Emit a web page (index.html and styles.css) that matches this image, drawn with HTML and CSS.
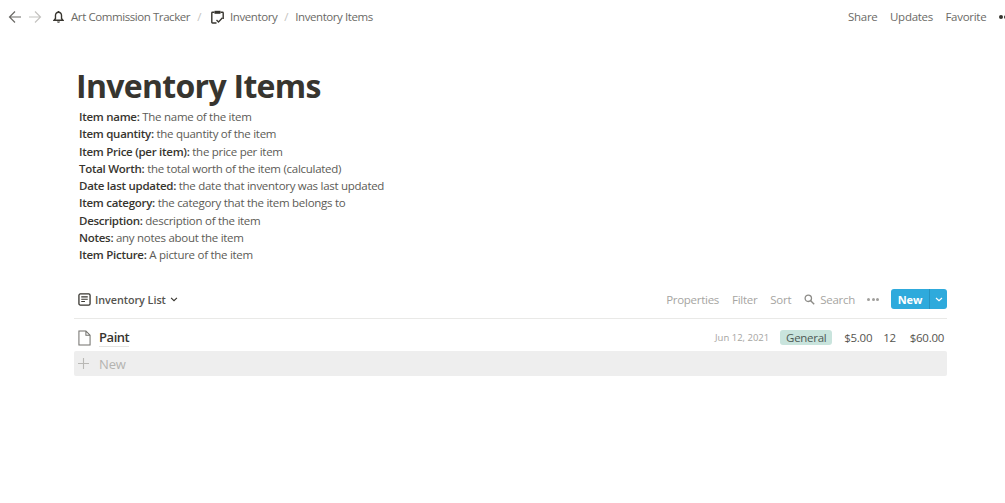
FILE: index.html
```html
<!DOCTYPE html>
<html lang="en">
<head>
<meta charset="utf-8">
<title>Inventory Items</title>
<link rel="stylesheet" href="styles.css">
</head>
<body>
<header class="topbar">
  <div class="crumbs">
    <svg class="nav" width="14" height="14" viewBox="0 0 14 14"><path d="M13 7H1.500M7 1.500 1.500 7 7 12.500" fill="none" stroke="#6b6a66" stroke-width="1.200"/></svg>
    <svg class="nav nav-next" width="14" height="14" viewBox="0 0 14 14"><path d="M1 7h11.500M7 1.500 12.500 7 7 12.500" fill="none" stroke="#c4c3c0" stroke-width="1.200"/></svg>
    <svg class="crumb-icon bell" width="11" height="14" viewBox="0 0 12 14"><path d="M6 1.800c-2.200 0-3.300 1.600-3.300 3.600v3.200L1.200 10.600h9.600L9.300 8.600V5.400C9.300 3.400 8.200 1.800 6 1.800Z" fill="none" stroke="#37352f" stroke-width="1.500"/><path d="M4.400 11.800a1.600 1.600 0 0 0 3.200 0Z M5.200 .4h1.600v1.600H5.200Z" fill="#37352f"/></svg>
    <span class="crumb">Art Commission Tracker</span>
    <span class="sep">/</span>
    <svg class="crumb-icon page-icon" width="13" height="14" viewBox="0 0 13 14"><path d="M3.500 2.200H1.500a.7.7 0 0 0-.7.7v9.400a.7.7 0 0 0 .7.700h4M9.500 2.200h2a.7.7 0 0 1 .7.7v6" fill="none" stroke="#37352f" stroke-width="1.400"/><path d="M3.500 .8h6v3h-6Z" fill="#37352f"/><path d="m5.500 10 2 2 4-4.200" fill="none" stroke="#37352f" stroke-width="1.300"/></svg>
    <span class="crumb">Inventory</span>
    <span class="sep">/</span>
    <span class="crumb">Inventory Items</span>
  </div>
  <nav class="actions">
    <span>Share</span>
    <span>Updates</span>
    <span>Favorite</span>
    <span class="clipped-dots" aria-hidden="true"><i></i><i></i></span>
  </nav>
</header>

<main class="page">
  <h1 class="title">Inventory Items</h1>
  <div class="desc">
    <p><b>Item name:</b> The name of the item</p>
    <p><b>Item quantity:</b> the quantity of the item</p>
    <p><b>Item Price (per item):</b> the price per item</p>
    <p><b>Total Worth:</b> the total worth of the item (calculated)</p>
    <p><b>Date last updated:</b> the date that inventory was last updated</p>
    <p><b>Item category:</b> the category that the item belongs to</p>
    <p><b>Description:</b> description of the item</p>
    <p><b>Notes:</b> any notes about the item</p>
    <p><b>Item Picture:</b> A picture of the item</p>
  </div>

  <section class="db">
    <div class="toolbar">
      <div class="view">
        <svg width="13" height="13" viewBox="0 0 14 14"><rect x="1" y="1" width="12" height="12" rx="1.500" fill="none" stroke="#37352f" stroke-width="1.400"/><path d="M3.500 4.200h7M3.500 6.700h7M3.500 9.200h4" stroke="#37352f" stroke-width="1.200"/></svg>
        <span class="view-name">Inventory List</span>
        <svg width="8" height="5" viewBox="0 0 9 6"><path d="m1 1 3.500 3.500L8 1" fill="none" stroke="#37352f" stroke-width="1.300"/></svg>
      </div>
      <div class="tools">
        <span>Properties</span>
        <span>Filter</span>
        <span>Sort</span>
        <span class="search">
          <svg width="11" height="11" viewBox="0 0 11 11"><circle cx="4.300" cy="4.300" r="3.200" fill="none" stroke="#8d8c88" stroke-width="1.300"/><path d="m6.700 6.700 3.500 3.500" stroke="#8d8c88" stroke-width="1.400"/></svg>
          Search
        </span>
        <span class="more" aria-hidden="true"><i></i><i></i><i></i></span>
        <div class="new-btn">
          <span class="new-label">New</span>
          <span class="new-caret"><svg width="8" height="5" viewBox="0 0 8 5"><path d="m1 1 3 2.800L7 1" fill="none" stroke="#fff" stroke-width="1.200"/></svg></span>
        </div>
      </div>
    </div>

    <div class="row">
      <div class="row-name">
        <svg width="13" height="16" viewBox="0 0 14 17"><path d="M1 1h7.500L13 5.500V16H1Z M8.500 1v4.500H13" fill="none" stroke="#72716d" stroke-width="1.100"/></svg>
        <span class="row-title">Paint</span>
      </div>
      <div class="row-props">
        <span class="date">Jun 12, 2021</span>
        <span class="tag">General</span>
        <span class="price">$5.00</span>
        <span class="qty">12</span>
        <span class="total">$60.00</span>
      </div>
    </div>
    <div class="add-row">
      <svg width="11" height="11" viewBox="0 0 11 11"><path d="M5.500 0v11M0 5.500h11" stroke="#b9b8b5" stroke-width="1.100"/></svg>
      <span>New</span>
    </div>
  </section>
</main>
</body>
</html>
```
FILE: styles.css
```css
* { box-sizing: border-box; }
html, body { margin: 0; height: 100%; overflow: hidden; background: #fff; }
body {
  font-family: "Open Sans", "Noto Sans", sans-serif;
  color: #37352f;
  font-size: 11.500px;
  letter-spacing: -.28px;
  width: 1005px;
  height: 503px;
}
.topbar {
  height: 33px;
  display: flex;
  justify-content: space-between;
  align-items: center;
  padding-left: 8px;
  color: #6b6a66;
  white-space: nowrap;
}
.crumbs { display: flex; align-items: center; }
.crumb { letter-spacing: -.42px; }
.nav-next { margin-left: 6px; }
.crumb-icon { margin-right: 7px; }
.bell { margin-left: 11px; margin-right: 7px; }
.page-icon { margin-left: 3px; margin-right: 6px; }
.sep { color: #c4c3c0; margin: 0 7px; }
.actions { display: flex; align-items: center; gap: 12.500px; flex: none; width: 157px; }
.clipped-dots { display: flex; gap: 1px; flex: none; }
.clipped-dots i { width: 4px; height: 4px; border-radius: 50%; background: #37352f; flex: none; }

.page { padding: 0 58px 0 74px; }
.title {
  margin: 31px 0 0 2px;
  font-size: 32px;
  line-height: 44px;
  font-weight: 700;
  letter-spacing: -.7px;
}
.desc { margin: 0 0 0 5px; color: #5c5b56; line-height: 17.300px; }
.desc p { margin: 0; }
.desc b { color: #37352f; font-weight: 600; }

.db { margin-top: 17px; }
.toolbar {
  height: 38px;
  display: flex;
  justify-content: space-between;
  align-items: center;
  border-bottom: 1px solid #e9e9e7;
  padding-left: 4px;
}
.view { display: flex; align-items: center; gap: 4px; font-weight: 600; font-size: 10.800px; letter-spacing: -.05px; color: #55544f; }
.tools { display: flex; align-items: center; gap: 13px; color: #a6a5a2; }
.search { display: flex; align-items: center; gap: 5px; }
.more { display: flex; gap: 1.500px; margin-left: -1px; }
.more i { width: 3px; height: 3px; border-radius: 50%; background: #a09f9c; }
.new-btn { display: flex; height: 20px; margin-left: -1px; border-radius: 3px; overflow: hidden; background: #2eaadc; color: #fff; font-size: 11px; font-weight: 700; letter-spacing: -.2px; }
.new-label { width: 38px; display: flex; align-items: center; justify-content: center; }
.new-caret { width: 18px; display: flex; align-items: center; justify-content: center; border-left: 1px solid #2693bf; }

.row { height: 32px; display: flex; justify-content: space-between; align-items: center; padding: 6px 3px 0 4px; }
.row-name { display: flex; align-items: center; gap: 8px; }
.row-title { font-size: 13px; font-weight: 600; letter-spacing: -.45px; border-bottom: 1px solid #e4e4e2; line-height: 17px; }
.row-props { display: flex; align-items: center; color: #55544f; }
.date { font-size: 9.500px; letter-spacing: 0; color: #a6a5a2; margin-right: 11px; }
.tag { background: #c9e4dd; border-radius: 3px; width: 52px; height: 15px; line-height: 15px; text-align: center; margin-right: 12px; color: #4e5a55; }
.price { margin-right: 11px; }
.qty { margin-right: 14px; }
.add-row {
  height: 25px;
  background: #eeeeee;
  border-radius: 2px;
  display: flex;
  align-items: center;
  gap: 10px;
  padding: 1px 0 0 4px;
  color: #b4b3b0;
  font-size: 13px;
  letter-spacing: -.15px;
}
```
